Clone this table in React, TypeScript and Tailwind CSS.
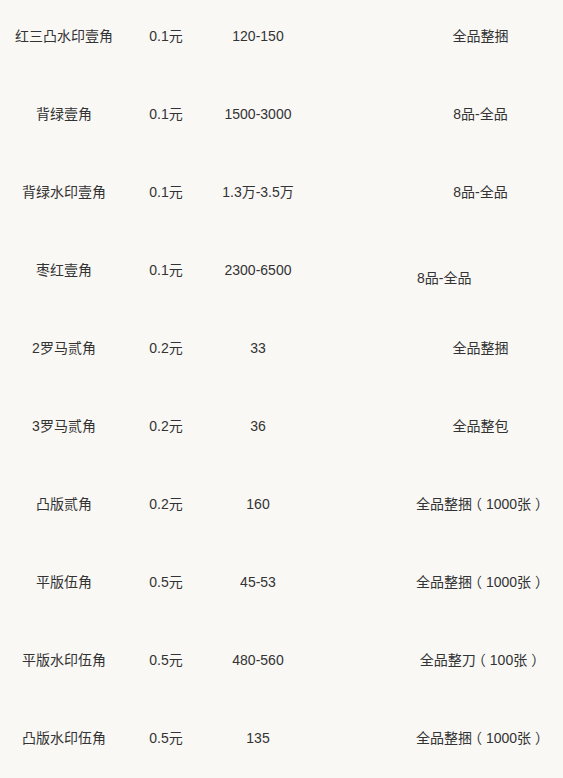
import type React from "react";

type Row = {
  name: string;
  face: string;
  price: string;
  grade: string;
  // one cell in the source sits off-centre, left aligned and a bit lower
  offset?: boolean;
};

const rows: Row[] = [
  { name: "红三凸水印壹角", face: "0.1元", price: "120-150", grade: "全品整捆" },
  { name: "背绿壹角", face: "0.1元", price: "1500-3000", grade: "8品-全品" },
  { name: "背绿水印壹角", face: "0.1元", price: "1.3万-3.5万", grade: "8品-全品" },
  { name: "枣红壹角", face: "0.1元", price: "2300-6500", grade: "8品-全品", offset: true },
  { name: "2罗马贰角", face: "0.2元", price: "33", grade: "全品整捆" },
  { name: "3罗马贰角", face: "0.2元", price: "36", grade: "全品整包" },
  { name: "凸版贰角", face: "0.2元", price: "160", grade: "全品整捆（1000张）" },
  { name: "平版伍角", face: "0.5元", price: "45-53", grade: "全品整捆（1000张）" },
  { name: "平版水印伍角", face: "0.5元", price: "480-560", grade: "全品整刀（100张）" },
  { name: "凸版水印伍角", face: "0.5元", price: "135", grade: "全品整捆（1000张）" },
];

// The source font draws full-width brackets in the middle of their cell,
// Noto pushes them to the inner edge. Trade letter-spacing between the
// bracket and its neighbour so the glyph moves without shifting the rest.
function Grade({ text }: { text: string }): React.JSX.Element {
  const chars = Array.from(text);
  return (
    <>
      {chars.map((c, i) => {
        const next = chars[i + 1];
        let cls = "";
        if (next === "（") cls = "tracking-[-4px]";
        else if (c === "（") cls = "tracking-[4px]";
        else if (next === "）") cls = "tracking-[4px]";
        else if (c === "）") cls = "tracking-[-4px]";
        return cls ? (
          <span key={i} className={cls}>
            {c}
          </span>
        ) : (
          c
        );
      })}
    </>
  );
}

export default function App(): React.JSX.Element {
  return (
    <div
      lang="zh-CN"
      className="min-h-[778px] w-full overflow-hidden bg-[#f9f8f5] text-[14px] text-[#333]"
      style={{ fontFamily: '"Liberation Sans", "Noto Sans CJK SC", sans-serif' }}
    >
      <div className="-mt-[3px]">
        {rows.map((r) => (
          <div
            key={r.name}
            className="grid h-[78px] grid-cols-[128px_76px_108px_86px_1fr] items-center"
          >
            <div className="text-center">{r.name}</div>
            <div className="text-center">{r.face}</div>
            <div className="text-center">{r.price}</div>
            <div />
            {r.offset ? (
              <div className="pl-[19px] pt-4 text-left">{r.grade}</div>
            ) : (
              <div className="text-center">
                <Grade text={r.grade} />
              </div>
            )}
          </div>
        ))}
      </div>
    </div>
  );
}
